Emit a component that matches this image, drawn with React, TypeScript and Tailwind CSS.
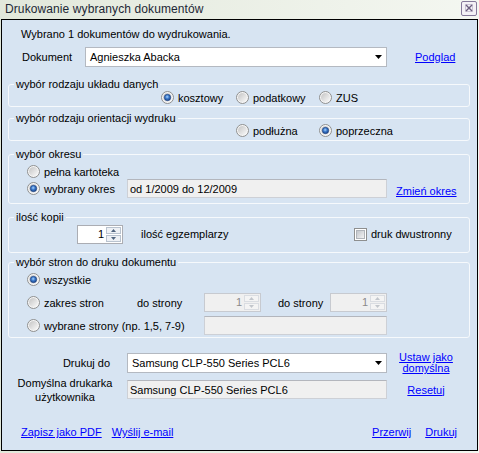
import type { ReactNode } from "react";

const Defs = () => (
    <svg width="0" height="0" className="block h-0 w-0">
        <defs>
            <linearGradient id="rbInner" x1="0" y1="0" x2="1" y2="1">
                <stop offset="0" stopColor="#c4c4c4" />
                <stop offset="1" stopColor="#fafafa" />
            </linearGradient>
            <radialGradient id="rbDot" cx="0.45" cy="0.4" r="0.65">
                <stop offset="0" stopColor="#a8d4ff" />
                <stop offset="0.45" stopColor="#3a78c9" />
                <stop offset="1" stopColor="#143c82" />
            </radialGradient>
            <linearGradient id="cbInner" x1="0" y1="0" x2="1" y2="1">
                <stop offset="0" stopColor="#bfc3c9" />
                <stop offset="1" stopColor="#f5f5f5" />
            </linearGradient>
            <linearGradient id="spinBtn" x1="0" y1="0" x2="0" y2="1">
                <stop offset="0" stopColor="#f7f7f7" />
                <stop offset="1" stopColor="#e4e4e4" />
            </linearGradient>
        </defs>
    </svg>
);

const Radio = ({ checked = false, label }: { checked?: boolean; label: string }) => (
    <label className="flex h-[13px] items-center gap-[4px] whitespace-nowrap">
        <svg width="13" height="13" viewBox="0 0 13 13" className="shrink-0">
            <circle cx="6.5" cy="6.5" r="6" fill="#f6f6f6" stroke="#8e8f8f" />
            <circle cx="6.5" cy="6.5" r="4.5" fill="url(#rbInner)" />
            {checked && <circle cx="6.5" cy="6.5" r="3.2" fill="url(#rbDot)" stroke="#1d3f7c" strokeWidth="0.6" />}
        </svg>
        <span>{label}</span>
    </label>
);

const Checkbox = ({ label }: { label: string }) => (
    <label className="flex h-[13px] items-center gap-[4px] whitespace-nowrap">
        <svg width="13" height="13" viewBox="0 0 13 13" className="shrink-0">
            <rect x="0.5" y="0.5" width="12" height="12" fill="#fff" stroke="#8e8f8f" />
            <rect x="2.5" y="2.5" width="8" height="8" fill="url(#cbInner)" stroke="#b0b4ba" />
        </svg>
        <span>{label}</span>
    </label>
);

const Arrow = ({ up, color }: { up?: boolean; color: string }) => (
    <svg width="5" height="3" viewBox="0 0 5 3">
        <path d={up ? "M0 3h5L2.5 0z" : "M0 0h5L2.5 3z"} fill={color} />
    </svg>
);

const Spinner = ({ width, disabled = false }: { width: string; disabled?: boolean }) => (
    <div
        className={`flex h-[19px] shrink-0 border ${width} ${
            disabled ? "border-[#c7cad0] bg-[#f0f0f0] text-[#8a8a8a]" : "border-[#abadb3] bg-white text-black"
        }`}
    >
        <span className="flex-1 pr-[2px] text-right leading-[17px]">1</span>
        <div className="my-[1px] mr-[1px] flex w-[15px] flex-col gap-px">
            <div className={`flex flex-1 items-center justify-center border ${disabled ? "border-[#dadde2] bg-[#f4f4f4]" : "border-[#b9c3cf] bg-[#eef1f5]"}`}>
                <Arrow up color={disabled ? "#c2c6cc" : "#51657f"} />
            </div>
            <div className={`flex flex-1 items-center justify-center border ${disabled ? "border-[#dadde2] bg-[#f4f4f4]" : "border-[#b9c3cf] bg-[#eef1f5]"}`}>
                <Arrow color={disabled ? "#c2c6cc" : "#51657f"} />
            </div>
        </div>
    </div>
);

const Combo = ({ value, width }: { value: string; width: string }) => (
    <div className={`flex h-[20px] shrink-0 items-center border border-[#b4b9c1] bg-white pl-[4px] pr-[4px] ${width}`}>
        <span className="flex-1 whitespace-nowrap">{value}</span>
        <svg width="7" height="4" viewBox="0 0 7 4">
            <path d="M0 0h7L3.5 4z" fill="#000" />
        </svg>
    </div>
);

const TextBox = ({ value = "", width }: { value?: string; width: string }) => (
    <div className={`flex h-[19px] shrink-0 items-center border border-[#cdd0d6] border-t-[#b3b6bd] bg-[#f0f0f0] pl-[2px] ${width}`}>
        <span className="whitespace-nowrap">{value}</span>
    </div>
);

const Link = ({ children, className = "" }: { children: ReactNode; className?: string }) => (
    <a href="#" className={`whitespace-nowrap text-[#0000ff] underline ${className}`}>
        {children}
    </a>
);

const GroupBox = ({ title, className, children }: { title: string; className: string; children: ReactNode }) => (
    <fieldset className={`rounded-[3px] border border-[#f6f9fc] ${className}`}>
        <legend className="ml-[5px] px-[2px] leading-[14px]">{title}</legend>
        {children}
    </fieldset>
);

const App = () => {
    return (
        <div className="flex h-[453px] w-[479px] flex-col bg-linear-to-r from-[#e2e8db] to-[#f4f7f1] font-['Liberation_Sans',Arial,sans-serif]">
            <Defs />
            {/* Title bar */}
            <div className="flex h-[19px] items-start pl-[5px] pr-[2px]">
                <span className="mt-[2px] flex-1 text-[12px] leading-[15px] tracking-[0.1px] text-[#1d2735]">
                    Drukowanie wybranych dokumentów
                </span>
                <svg width="16" height="15" viewBox="0 0 16 15" className="mt-[1px]">
                    <rect x="0.5" y="0.5" width="15" height="14" rx="1.5" fill="#f3f1f5" stroke="#85799a" />
                    <rect x="4.5" y="3.5" width="7" height="7" fill="none" stroke="#c9c2d3" />
                    <path d="M5 4l6 6M11 4l-6 6" stroke="#6b5e7e" strokeWidth="1.4" />
                </svg>
            </div>

            {/* Client area */}
            <div className="mx-[1px] h-[432px] border border-black bg-[#d7e4f2] pl-[6px] pr-[7px] text-[11px] leading-[14px] text-black">
                <p className="ml-[13px] mt-[7px]">Wybrano 1 dokumentów do wydrukowania.</p>

                <div className="mt-[6px] flex h-[20px] items-center">
                    <span className="ml-[14px] w-[63px]">Dokument</span>
                    <Combo value="Agnieszka Abacka" width="w-[302px]" />
                    <Link className="ml-[28px]">Podglad</Link>
                </div>

                <GroupBox title="wybór rodzaju układu danych" className="mt-[10px] h-[30px]">
                    <div className="flex h-[13px] items-center pl-[152px]">
                        <div className="w-[75px]"><Radio checked label="kosztowy" /></div>
                        <div className="w-[83px]"><Radio label="podatkowy" /></div>
                        <Radio label="ZUS" />
                    </div>
                </GroupBox>

                <GroupBox title="wybór rodzaju orientacji wydruku" className="mt-[4px] h-[30px]">
                    <div className="-mt-[1px] flex h-[13px] items-center pl-[227px]">
                        <div className="w-[83px]"><Radio label="podłużna" /></div>
                        <Radio checked label="poprzeczna" />
                    </div>
                </GroupBox>

                <GroupBox title="wybór okresu" className="mt-[6px] h-[57px]">
                    <div className="mt-[4px] flex h-[13px] items-center pl-[18px]">
                        <Radio label="pełna kartoteka" />
                    </div>
                    <div className="mt-[1px] flex h-[19px] items-center pl-[18px]">
                        <div className="w-[100px]"><Radio checked label="wybrany okres" /></div>
                        <TextBox value="od 1/2009 do 12/2009" width="w-[260px]" />
                        <Link className="ml-[9px] self-end">Zmień okres</Link>
                    </div>
                </GroupBox>

                <GroupBox title="ilość kopii" className="mt-[6px] h-[43px]">
                    <div className="flex h-[20px] items-center pl-[68px]">
                        <Spinner width="w-[46px]" />
                        <span className="ml-[18px] w-[213px]">ilość egzemplarzy</span>
                        <Checkbox label="druk dwustronny" />
                    </div>
                </GroupBox>

                <GroupBox title="wybór stron do druku dokumentu" className="mt-[2px] h-[83px]">
                    <div className="mt-[4px] flex h-[13px] items-center pl-[18px]">
                        <Radio checked label="wszystkie" />
                    </div>
                    <div className="mt-[7px] flex h-[19px] items-center pl-[18px]">
                        <div className="w-[110px]"><Radio label="zakres stron" /></div>
                        <span className="w-[67px]">do strony</span>
                        <Spinner width="w-[57px]" disabled />
                        <span className="ml-[17px] w-[52px]">do strony</span>
                        <Spinner width="w-[57px]" disabled />
                    </div>
                    <div className="mt-[4px] flex h-[19px] items-center pl-[18px]">
                        <div className="w-[177px]"><Radio label="wybrane strony (np. 1,5, 7-9)" /></div>
                        <TextBox width="w-[183px]" />
                    </div>
                </GroupBox>

                {/* Printer */}
                <div className="mt-[15px] flex h-[20px] items-center">
                    <span className="w-[114px] pr-[12px] text-right">Drukuj do</span>
                    <div className="ml-[5px]">
                        <Combo value="Samsung CLP-550 Series PCL6" width="w-[260px]" />
                    </div>
                    <div className="flex w-[78px] justify-center text-center leading-[11px]">
                        <Link>
                            Ustaw jako
                            <br />
                            domyślna
                        </Link>
                    </div>
                </div>
                <div className="mt-[7px] flex h-[19px] items-center">
                    <span className="w-[114px] text-center leading-[14px]">
                        Domyślna drukarka
                        <br />
                        użytkownika
                    </span>
                    <div className="ml-[5px]">
                        <TextBox value="Samsung CLP-550 Series PCL6" width="w-[260px]" />
                    </div>
                    <div className="flex w-[78px] justify-center">
                        <Link>Resetuj</Link>
                    </div>
                </div>

                {/* Footer links */}
                <div className="mt-[26px] flex h-[14px] items-center">
                    <Link className="ml-[13px]">Zapisz jako PDF</Link>
                    <Link className="ml-[10px]">Wyślij e-mail</Link>
                    <Link className="ml-auto">Przerwij</Link>
                    <Link className="ml-[14px] mr-[13px]">Drukuj</Link>
                </div>
            </div>
        </div>
    );
};

export default App;
